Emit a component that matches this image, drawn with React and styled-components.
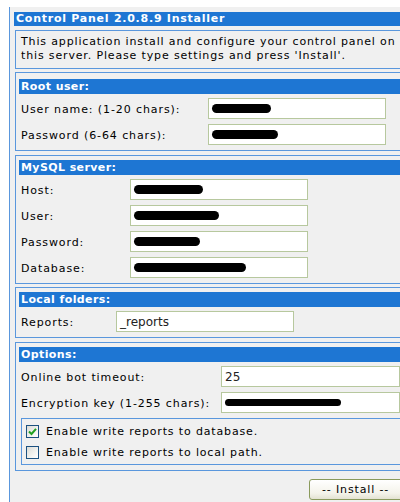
import React from "react";
import styled, { createGlobalStyle } from "styled-components";

const GlobalStyle = createGlobalStyle`
  html, body {
    margin: 0;
    padding: 0;
    background: #fff;
    overflow: hidden;
  }
  body {
    font-family: "DejaVu Sans", Verdana, sans-serif;
    font-size: 11px;
    color: #000;
  }
`;

const Panel = styled.div`
  box-sizing: border-box;
  width: 430px;
  min-height: 500px;
  margin: 7px 0 0 9px;
  padding: 5px 0 0 4px;
  background: #f0f0f0;
  border-left: 1px solid #5a97dd;
`;

const TitleBar = styled.div`
  height: 14px;
  line-height: 14px;
  padding-left: 2px;
  background: #1e76d3;
  color: #fff;
  font-weight: bold;
  letter-spacing: 0.75px;
`;

const Box = styled.div`
  box-sizing: border-box;
  margin: ${p => p.$top || 4}px 0 0 1px;
  padding: ${p => p.$pad || "4px 3px 5px 3px"};
  border: 1px solid #5a97dd;
`;

const Intro = styled(Box)`
  padding: 4px 5px 5px 5px;
  line-height: 14px;
  letter-spacing: 0.85px;
`;

const Header = styled.div`
  height: 15px;
  line-height: 15px;
  padding-left: 2px;
  background: #1e76d3;
  color: #fff;
  font-weight: bold;
  letter-spacing: 0.4px;
`;

const Rows = styled.div`
  display: grid;
  grid-template-columns: ${p => p.$label}px ${p => p.$field}px;
  row-gap: 5px;
  padding: 4px 0 0 2px;
  align-items: center;
`;

const Label = styled.div`
  white-space: nowrap;
  letter-spacing: 0.9px;
  padding-top: 2px;
`;

const Field = styled.div`
  box-sizing: border-box;
  height: 21px;
  display: flex;
  align-items: center;
  padding: 0 3px;
  background: #fff;
  border: 1px solid #b7c89e;
  font-size: 12px;
  color: #222;
`;

const Scribble = styled.span`
  display: block;
  width: ${p => p.$w}px;
  height: ${p => p.$h || 9}px;
  margin-left: ${p => p.$x || 0}px;
  border-radius: 5px;
  background: #000;
`;

const CheckGroup = styled.div`
  box-sizing: border-box;
  margin: 5px 0 0 2px;
  padding: 5px 0 5px 4px;
  border: 1px solid #5a97dd;
`;

const CheckRow = styled.label`
  display: flex;
  align-items: center;
  height: 14px;
  gap: 7px;
  letter-spacing: 0.85px;
  & + & {
    margin-top: 7px;
  }
`;

const CheckBox = styled.span`
  box-sizing: border-box;
  width: 13px;
  height: 13px;
  display: flex;
  align-items: center;
  justify-content: center;
  border: 1px solid #1c5180;
  background: linear-gradient(135deg, #dcdcd6 0%, #f6f6f4 70%, #fff 100%);
`;

const Footer = styled.div`
  padding: 8px 0 0 295px;
`;

const Button = styled.button`
  box-sizing: border-box;
  width: 100px;
  height: 21px;
  padding: 0 0 0 12px;
  text-align: left;
  font-family: "DejaVu Sans", Verdana, sans-serif;
  font-size: 11px;
  letter-spacing: 0.85px;
  color: #000;
  border: 1px solid #8a9a5c;
  border-radius: 3px;
  background: linear-gradient(#ffffff, #f4f3ea 70%, #e3e2d2);
`;

const Check = () => (
  <svg width="9" height="9" viewBox="0 0 9 9">
    <path d="M1 4.5 L3.5 7 L8 1.8" fill="none" stroke="#21a121" strokeWidth="2" />
  </svg>
);

const Input = ({ children }) => <Field>{children}</Field>;

export default function App() {
  return (
    <>
      <GlobalStyle />
      <Panel>
        <TitleBar>Control Panel 2.0.8.9 Installer</TitleBar>
        <Intro $top={4}>
          This application install and configure your control panel on
          <br />
          this server. Please type settings and press 'Install'.
        </Intro>

        <Box $top={3} $pad="6px 3px 5px 3px">
          <Header>Root user:</Header>
          <Rows $label={187} $field={178}>
            <Label>User name: (1-20 chars):</Label>
            <Input><Scribble $w={59} /></Input>
            <Label>Password (6-64 chars):</Label>
            <Input><Scribble $w={66} /></Input>
          </Rows>
        </Box>

        <Box>
          <Header>MySQL server:</Header>
          <Rows $label={109} $field={178}>
            <Label>Host:</Label>
            <Input><Scribble $w={69} /></Input>
            <Label>User:</Label>
            <Input><Scribble $w={85} /></Input>
            <Label>Password:</Label>
            <Input><Scribble $w={66} /></Input>
            <Label>Database:</Label>
            <Input><Scribble $w={112} /></Input>
          </Rows>
        </Box>

        <Box $top={3}>
          <Header>Local folders:</Header>
          <Rows $label={95} $field={178}>
            <Label>Reports:</Label>
            <Input>_reports</Input>
          </Rows>
        </Box>

        <Box>
          <Header>Options:</Header>
          <Rows $label={200} $field={179}>
            <Label>Online bot timeout:</Label>
            <Input>25</Input>
            <Label>Encryption key (1-255 chars):</Label>
            <Input><Scribble $w={116} $h={7} /></Input>
          </Rows>
          <CheckGroup>
            <CheckRow>
              <CheckBox><Check /></CheckBox>
              Enable write reports to database.
            </CheckRow>
            <CheckRow>
              <CheckBox />
              Enable write reports to local path.
            </CheckRow>
          </CheckGroup>
        </Box>

        <Footer>
          <Button>-- Install --</Button>
        </Footer>
      </Panel>
    </>
  );
}
